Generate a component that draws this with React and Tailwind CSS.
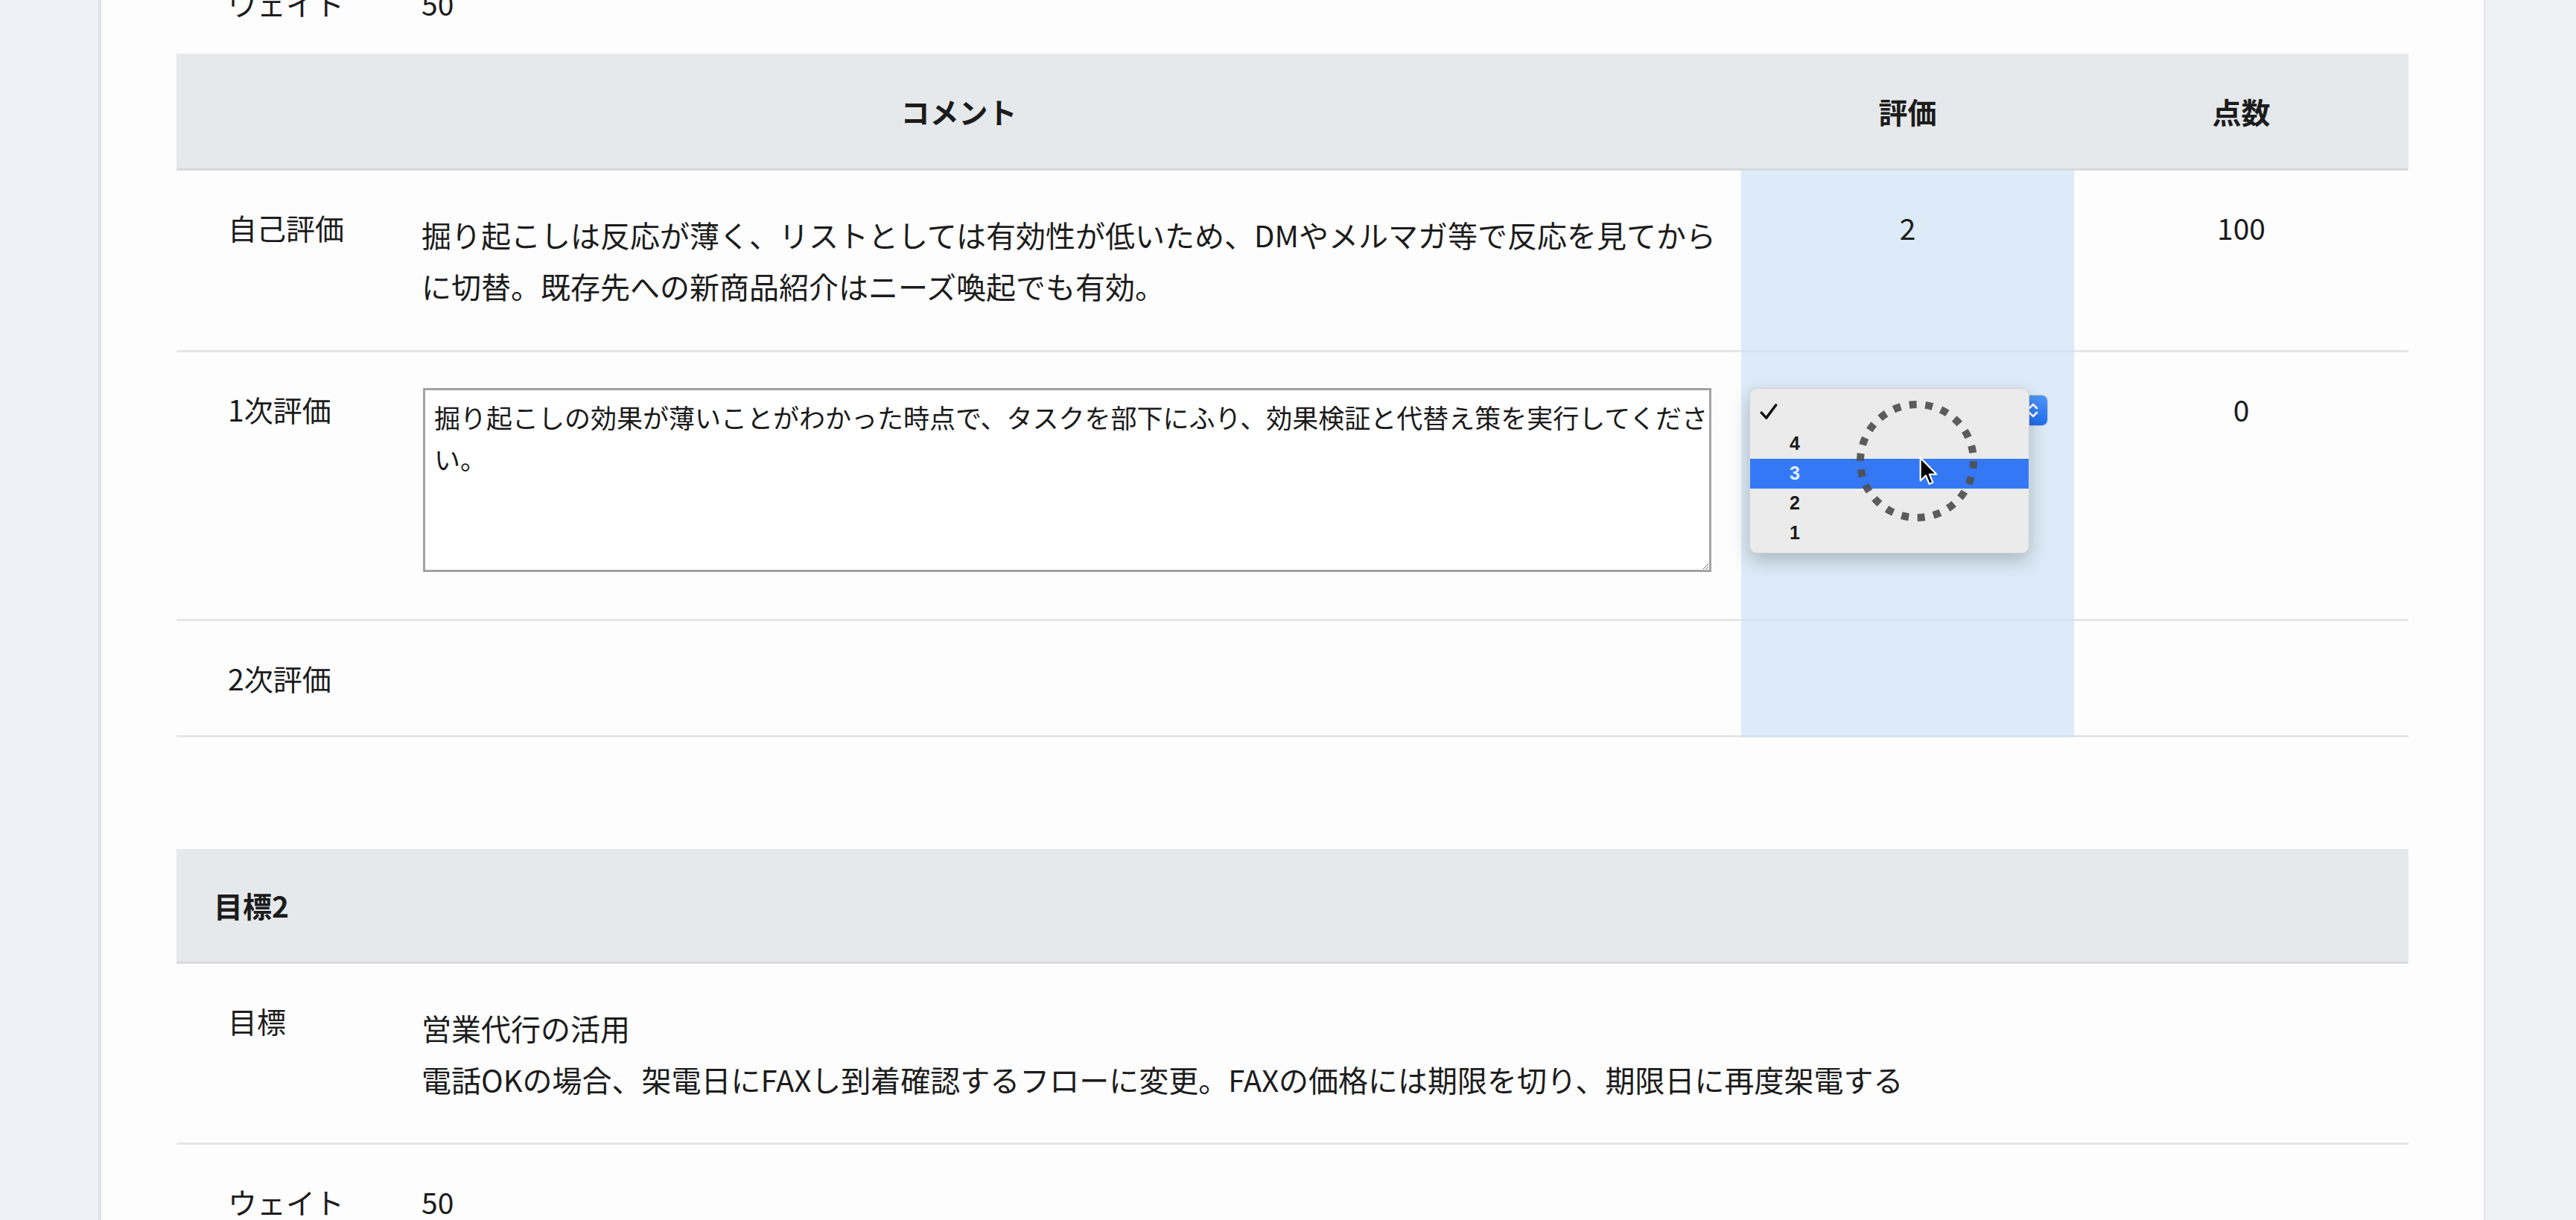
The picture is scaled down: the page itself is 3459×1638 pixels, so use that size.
import React from 'react';

// Evaluation sheet: comment table for goal 1 (with the open rating menu) and the start of goal 2.

const comment1 =
  '掘り起こしは反応が薄く、リストとしては有効性が低いため、DMやメルマガ等で反応を見てからに切替。既存先への新商品紹介はニーズ喚起でも有効。';
const comment2 =
  '掘り起こしの効果が薄いことがわかった時点で、タスクを部下にふり、効果検証と代替え策を実行してください。';

function CheckMark() {
  return (
    <svg className="-mt-[6px]" width="26" height="26" viewBox="0 0 24 24" fill="none" stroke="#111" strokeWidth="3.2" strokeLinecap="round" strokeLinejoin="round">
      <polyline points="3,13 9,19.5 21,3.5" />
    </svg>
  );
}

function MenuItem({ label, active, checked }) {
  return (
    <div className={active ? 'flex h-[40px] items-center bg-[#3478f6] text-[#e4efff]' : 'flex h-[40px] items-center text-[#1a1a1a]'}>
      <div className="flex w-[53px] items-center pl-[12px]">{checked && <CheckMark />}</div>
      <span>{label}</span>
    </div>
  );
}

function RatingSelect() {
  return (
    <div className="relative ml-[12px] mt-[5px] h-[42px] w-[400px]">
      {/* closed select underneath (only its blue arrow part peeks out) */}
      <div className="flex h-full w-full overflow-hidden rounded-[8px] border border-[#c6c6c6] bg-white">
        <div className="flex-1" />
        <div className="flex w-[38px] items-center justify-center bg-gradient-to-b from-[#4d95fb] to-[#1f6ef0]">
          <svg width="22" height="26" viewBox="0 0 22 26" fill="none" stroke="white" strokeWidth="2.6" strokeLinecap="round" strokeLinejoin="round">
            <path d="M6 10 L11 5 L16 10" />
            <path d="M6 16 L11 21 L16 16" />
          </svg>
        </div>
      </div>

      {/* open option list */}
      <div className="absolute left-[-1px] top-[-9px] h-[222px] w-[376px] rounded-[10px] border border-[#d3d3d3] bg-[#ebebeb] pt-[14px] font-['Liberation_Sans',sans-serif] text-[25px] font-bold shadow-[0_10px_26px_rgba(0,0,0,0.22)]">
        <MenuItem label="" checked />
        <MenuItem label="4" />
        <MenuItem label="3" active />
        <MenuItem label="2" />
        <MenuItem label="1" />

        {/* click indicator from the screen recorder */}
        <svg className="absolute left-[138px] top-[11px]" width="172" height="172" viewBox="0 0 172 172" fill="none">
          <circle cx="86" cy="86" r="76" stroke="#4f4f4f" strokeOpacity="0.92" strokeWidth="10" strokeDasharray="10 11.7" />
        </svg>
        <svg className="absolute left-[227px] top-[91px]" width="26" height="40" viewBox="0 0 24 37">
          <path d="M1.5 1.5 L1.5 30 L8.2 23.6 L12.6 34 L17 32.2 L12.7 22 L21.5 22 Z" fill="#000" stroke="#fff" strokeWidth="2" strokeLinejoin="round" />
        </svg>
      </div>
    </div>
  );
}

function CommentTable() {
  const line = 'border-b-[3px] border-[#e4e6e8]';
  const blue = 'bg-[#dcebf7] border-b-[3px] border-[#d4e3ef]';
  return (
    <div className="grid grid-cols-[329px_1772px_447px_449px]">
      {/* header */}
      <div className="col-span-2 flex h-[157px] items-center justify-center border-b-[3px] border-[#d6dadd] bg-[#e6e9ec] font-bold">コメント</div>
      <div className="flex h-[157px] items-center justify-center border-b-[3px] border-[#d6dadd] bg-[#e6e9ec] font-bold">評価</div>
      <div className="flex h-[157px] items-center justify-center border-b-[3px] border-[#d6dadd] bg-[#e6e9ec] font-bold">点数</div>

      {/* 自己評価 */}
      <div className={`pl-[69px] pt-[52px] leading-[49px] ${line}`}>自己評価</div>
      <div className={`pb-[51px] pr-[22px] pt-[52px] text-[40px] leading-[69px] ${line}`}>{comment1}</div>
      <div className={`pt-[52px] text-center leading-[49px] ${blue}`}>2</div>
      <div className={`pt-[52px] text-center leading-[49px] ${line}`}>100</div>

      {/* 1次評価 */}
      <div className={`pl-[69px] pt-[52px] leading-[49px] ${line}`}>1次評価</div>
      <div className={`pb-[63px] pt-[48px] ${line}`}>
        <textarea
          defaultValue={comment2}
          className="ml-[2px] block h-[247px] w-[1730px] border-[3px] border-[#a3a3a3] bg-white pl-[12px] pr-0 pt-[8px] font-['Noto_Sans_CJK_JP',sans-serif] text-[35px] leading-[56px] text-[#1a1a1a] outline-none"
        />
      </div>
      <div className={`relative z-10 pt-[52px] ${blue}`}>
        <RatingSelect />
      </div>
      <div className={`pt-[52px] text-center leading-[49px] ${line}`}>0</div>

      {/* 2次評価 */}
      <div className={`pb-[52px] pl-[69px] pt-[52px] leading-[49px] ${line}`}>2次評価</div>
      <div className={line} />
      <div className={blue} />
      <div className={line} />
    </div>
  );
}

function GoalTable() {
  const line = 'border-b-[3px] border-[#e4e6e8]';
  return (
    <div className="grid grid-cols-[329px_1fr]">
      <div className="col-span-2 flex h-[154px] items-center border-b-[3px] border-[#d6dadd] bg-[#e6e9ec] pl-[50px] font-bold">目標2</div>

      <div className={`pl-[69px] pt-[52px] leading-[49px] ${line}`}>目標</div>
      <div className={`pb-[50px] pt-[52px] text-[40px] leading-[69px] ${line}`}>
        <div>営業代行の活用</div>
        <div>電話OKの場合、架電日にFAXし到着確認するフローに変更。FAXの価格には期限を切り、期限日に再度架電する</div>
      </div>

      <div className={`pb-[52px] pl-[69px] pt-[52px] leading-[49px] ${line}`}>ウェイト</div>
      <div className={`pt-[52px] leading-[49px] ${line}`}>50</div>
    </div>
  );
}

export default function App() {
  return (
    <div className="flex h-[1638px] w-[3459px] overflow-hidden bg-[#eef2f5] font-['Noto_Sans_CJK_JP',sans-serif] text-[39px] text-[#1c1c1c]">
      <aside className="w-[136px] shrink-0 border-r-[4px] border-[#dfe3e7] bg-[#eef2f6]" />

      <main className="w-[3199px] shrink-0 bg-[#fdfdfd] px-[101px]">
        {/* tail of goal 1's weight row, scrolled mostly out of view */}
        <div className="h-[72px] overflow-hidden">
          <div className="-mt-[20px] grid grid-cols-[329px_1fr] leading-[49px]">
            <div className="pl-[69px]">ウェイト</div>
            <div>50</div>
          </div>
        </div>

        <CommentTable />

        <div className="mt-[150px]">
          <GoalTable />
        </div>
      </main>

      <aside className="flex-1 border-l-[3px] border-[#e6eaee] bg-[#eef2f5]" />
    </div>
  );
}
